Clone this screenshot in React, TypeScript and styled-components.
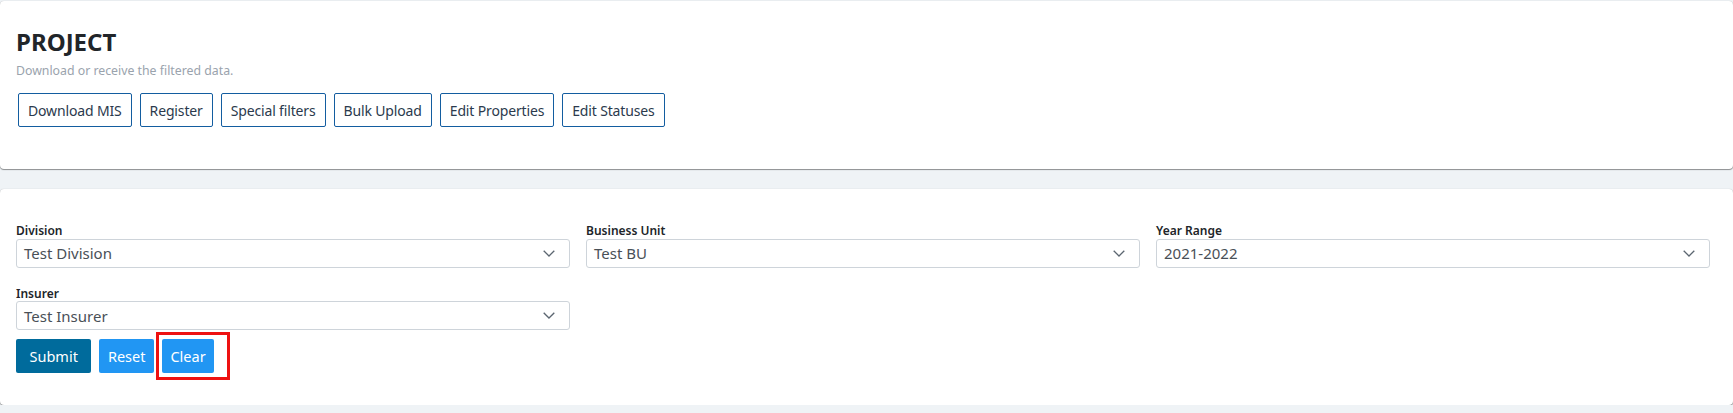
import styled, { createGlobalStyle } from "styled-components";

const GlobalStyle = createGlobalStyle`
  body {
    margin: 0;
    background: #eff3f6;
    font-family: "Noto Sans", "Open Sans", sans-serif;
    color: #212529;
  }
`;

const actions = ["Download MIS", "Register", "Special filters", "Bulk Upload", "Edit Properties", "Edit Statuses"];

const filters = [
  { label: "Division", value: "Test Division" },
  { label: "Business Unit", value: "Test BU" },
  { label: "Year Range", value: "2021-2022" },
  { label: "Insurer", value: "Test Insurer" }
];

const Chevron = () => (
  <svg width="12" height="7" viewBox="0 0 12 7" fill="none">
    <polyline points="0.7,0.7 6,6 11.3,0.7" stroke="#5b6570" strokeWidth="1.3" />
  </svg>
);

const App = () => {
  return (
    <Page>
      <GlobalStyle />
      <HeaderCard>
        <Title>PROJECT</Title>
        <Subtitle>Download or receive the filtered data.</Subtitle>
        <ActionRow>
          {actions.map((a) => (
            <OutlineButton key={a}>{a}</OutlineButton>
          ))}
        </ActionRow>
      </HeaderCard>

      <FilterCard>
        <FilterGrid>
          {filters.map((f) => (
            <Field key={f.label}>
              <Label>{f.label}</Label>
              <Select>
                <span>{f.value}</span>
                <Chevron />
              </Select>
            </Field>
          ))}
        </FilterGrid>
        <ButtonRow>
          <SolidButton $variant="primary">Submit</SolidButton>
          <SolidButton $variant="light">Reset</SolidButton>
          <Highlighted>
            <SolidButton $variant="light">Clear</SolidButton>
          </Highlighted>
        </ButtonRow>
      </FilterCard>
    </Page>
  );
};

export default App;

const Page = styled.div`
  padding-top: 1px;
  width: 1733px;
`;

const Card = styled.div`
  background: #fff;
  border-radius: 4px;
  box-shadow: 0 0 1px rgba(0, 0, 0, 0.25), 0 1px 1px rgba(0, 0, 0, 0.4);
`;

const HeaderCard = styled(Card)`
  height: 168px;
  box-sizing: border-box;
  padding: 26px 16px 0 16px;
  margin-bottom: 20px;
`;

const Title = styled.h1`
  margin: 0;
  font-size: 24px;
  line-height: 30px;
  font-weight: 700;
  color: #212529;
`;

const Subtitle = styled.p`
  margin: 4px 0 0;
  font-size: 12.3px;
  line-height: 19px;
  color: #9aa3ad;
`;

const ActionRow = styled.div`
  display: flex;
  gap: 8px;
  margin-top: 13px;
  padding-left: 2px;
`;

const OutlineButton = styled.button`
  height: 34px;
  padding: 0 9px;
  font-family: inherit;
  font-size: 14px;
  letter-spacing: -0.15px;
  color: #2b3a4d;
  background: #fff;
  border: 1px solid #135da0;
  border-radius: 2px;
  cursor: pointer;
`;

const FilterCard = styled(Card)`
  height: 216px;
  box-sizing: border-box;
  padding: 34px 16px 0 16px;
`;

const FilterGrid = styled.div`
  display: grid;
  grid-template-columns: repeat(3, 554px);
  column-gap: 16px;
  row-gap: 18px;
`;

const Field = styled.div`
  display: flex;
  flex-direction: column;
`;

const Label = styled.label`
  font-size: 12px;
  line-height: 15.5px;
  font-weight: 600;
  color: #212529;
`;

const Select = styled.div`
  height: 29px;
  box-sizing: border-box;
  display: flex;
  align-items: center;
  justify-content: space-between;
  padding: 0 14px 0 7px;
  border: 1px solid #ced4da;
  border-radius: 3px;
  font-size: 15px;
  color: #495057;
`;

const ButtonRow = styled.div`
  display: flex;
  gap: 8px;
  margin-top: 9px;
`;

const SolidButton = styled.button<{ $variant: "primary" | "light" }>`
  height: 34px;
  padding: 0 ${(p) => (p.$variant === "primary" ? "13.5px" : "8.5px")};
  font-family: inherit;
  font-size: 14.5px;
  color: #fff;
  border: none;
  border-radius: 2px;
  background: ${(p) => (p.$variant === "primary" ? "#006b9c" : "#2196f3")};
  cursor: pointer;
`;

const Highlighted = styled.span`
  position: relative;
  display: inline-flex;

  &::after {
    content: "";
    position: absolute;
    left: -6px;
    top: -7px;
    right: -16px;
    bottom: -7px;
    border: 3px solid #ee1111;
    pointer-events: none;
  }
`;
